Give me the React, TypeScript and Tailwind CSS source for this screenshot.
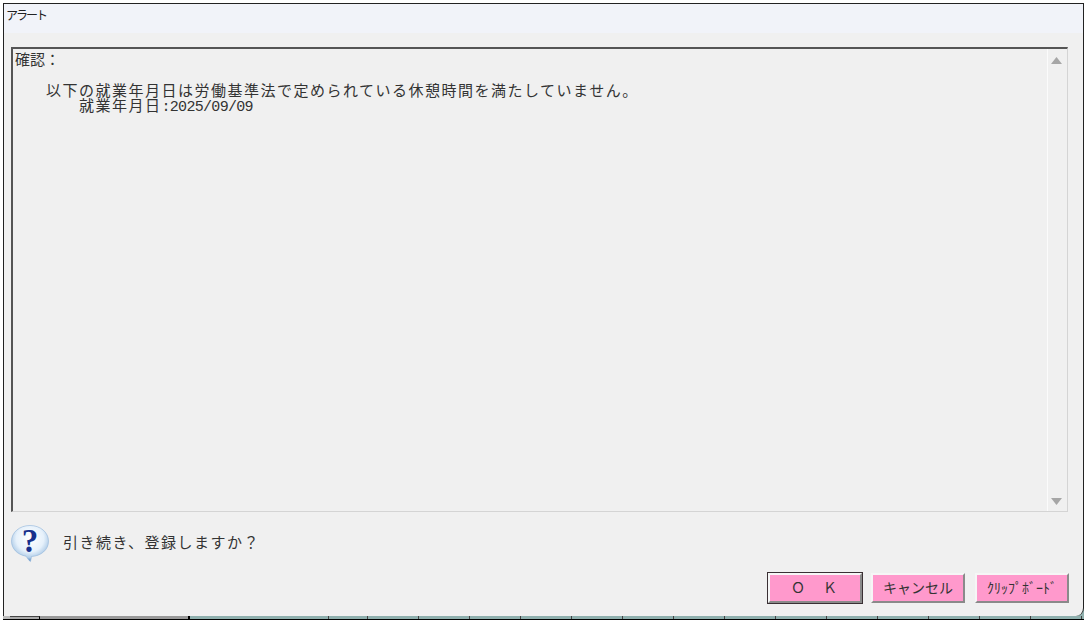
import type { ReactNode } from "react";

const font = "font-['Liberation_Sans','Noto_Sans_CJK_JP',sans-serif]";
const teal = [...Array(16).keys()];

function QuestionIcon() {
  return (
    <svg width="40" height="40" viewBox="0 0 40 40" className="shrink-0 mt-[2px]">
      <defs>
        <radialGradient id="bub" cx="0.5" cy="0.36" r="0.62">
          <stop offset="0" stopColor="#ffffff" />
          <stop offset="0.6" stopColor="#e6f1fb" />
          <stop offset="0.85" stopColor="#b4cfe9" />
          <stop offset="1" stopColor="#5d8fc6" />
        </radialGradient>
      </defs>
      <path
        d="M20 1.5C9.5 1.5 1.5 8.4 1.5 17.2c0 7.5 5.8 13.4 14.5 15 1.3 1.6 2.6 4.2 4.4 5.3.6-1.6.8-3.2 1.1-5C30.8 32 38.5 26 38.5 17.2 38.5 8.4 30.5 1.5 20 1.5z"
        fill="url(#bub)"
        stroke="#8fb3da"
        strokeWidth="0.6"
      />
      <text x="20" y="28" textAnchor="middle" fontFamily="'Liberation Serif',serif" fontWeight="700" fontSize="33" fill="#17308c">?</text>
    </svg>
  );
}

function Btn({ children, active }: { children: ReactNode; active?: boolean }) {
  return (
    <div
      className={`w-[94px] h-[30px] flex items-center justify-center bg-[#ff99cc] text-[#333] border-2 border-t-[#f6f6f6] border-l-[#f6f6f6] border-r-[#8a8a8a] border-b-[#8a8a8a] ${
        active ? "outline outline-1 outline-[#3a3034]" : ""
      }`}
    >
      {children}
    </div>
  );
}

export default function App() {
  return (
    <div className={`w-[1086px] h-[620px] bg-white pt-[3px] pl-[3px] pr-[2px] flex flex-col overflow-hidden ${font}`}>
      <div className="flex-1 min-h-0 bg-[#8fb0ae]">
        <div className="h-full border border-b-0 border-[#222] rounded-br-[8px] bg-[#f0f0f0] flex flex-col">
          <div className="h-[29px] bg-[#f1f3f9] pl-[2px] pt-[2px] text-[12px] tracking-[-2px] leading-[20px] text-[#222] shrink-0">アラート</div>
          <div className="mt-[14px] ml-[7px] mr-[15px] h-[465px] shrink-0 flex border-t-2 border-l-2 border-t-[#555] border-l-[#555] border-r border-b border-r-[#d4d4d4] border-b-[#d4d4d4]">
            <div className="flex-1 text-[#333] pl-[2px] pt-[1px] text-[15px] tracking-[1.5px] leading-[15px]">
              <div className="h-[16px] leading-[20px] tracking-[0px]">確認：</div>
              <div className="mt-[17px] ml-[31px] whitespace-nowrap">以下の就業年月日は労働基準法で定められている休憩時間を満たしていません。</div>
              <div className="ml-[64px] whitespace-nowrap">
                就業年月日<span className="font-['Liberation_Mono',monospace] tracking-[-0.7px]">:2025/09/09</span>
              </div>
            </div>
            <div className="w-[20px] pr-[2px] border-l border-l-[#fbfbfb] flex flex-col items-center justify-between pt-[8px] pb-[6px]">
              <svg width="11" height="7" viewBox="0 0 11 7"><path d="M5.5 0l5.5 7H0z" fill="#a6a6a6" /></svg>
              <svg width="11" height="7" viewBox="0 0 11 7"><path d="M0 0h11L5.5 7z" fill="#a6a6a6" /></svg>
            </div>
          </div>
          <div className="mt-[11px] ml-[6px] flex items-center gap-[13px] h-[40px] shrink-0">
            <QuestionIcon />
            <span className="text-[15px] tracking-[1.5px] text-[#333]">引き続き、登録しますか？</span>
          </div>
          <div className="mt-[10px] mr-[14px] flex justify-end text-[14px]">
            <Btn active><span className="tracking-[2px]">Ｏ　Ｋ</span></Btn>
            <div className="w-[9px]" />
            <Btn>キャンセル</Btn>
            <div className="w-[10px]" />
            <Btn>ｸﾘｯﾌﾟﾎﾞｰﾄﾞ</Btn>
          </div>
        </div>
      </div>
      <div className="h-[4px] shrink-0 flex border-b border-b-black bg-[#8fb0ae]">
        <div className="w-[7px] shrink-0 bg-[#bbb]" />
        <div className="w-[30px] shrink-0 bg-[#aaa] border-t border-t-[#444] border-r border-r-black" />
        <div className="w-[150px] shrink-0 bg-[#999] border-r-2 border-r-black" />
        <div className="w-[139px] shrink-0 border-r border-r-[#444]" />
        <div className="w-[39px] shrink-0 border-r border-r-[#444]" />
        {teal.map((i) => (
          <div key={i} className="w-[51px] shrink-0 border-r border-r-[#444]" />
        ))}
      </div>
    </div>
  );
}
